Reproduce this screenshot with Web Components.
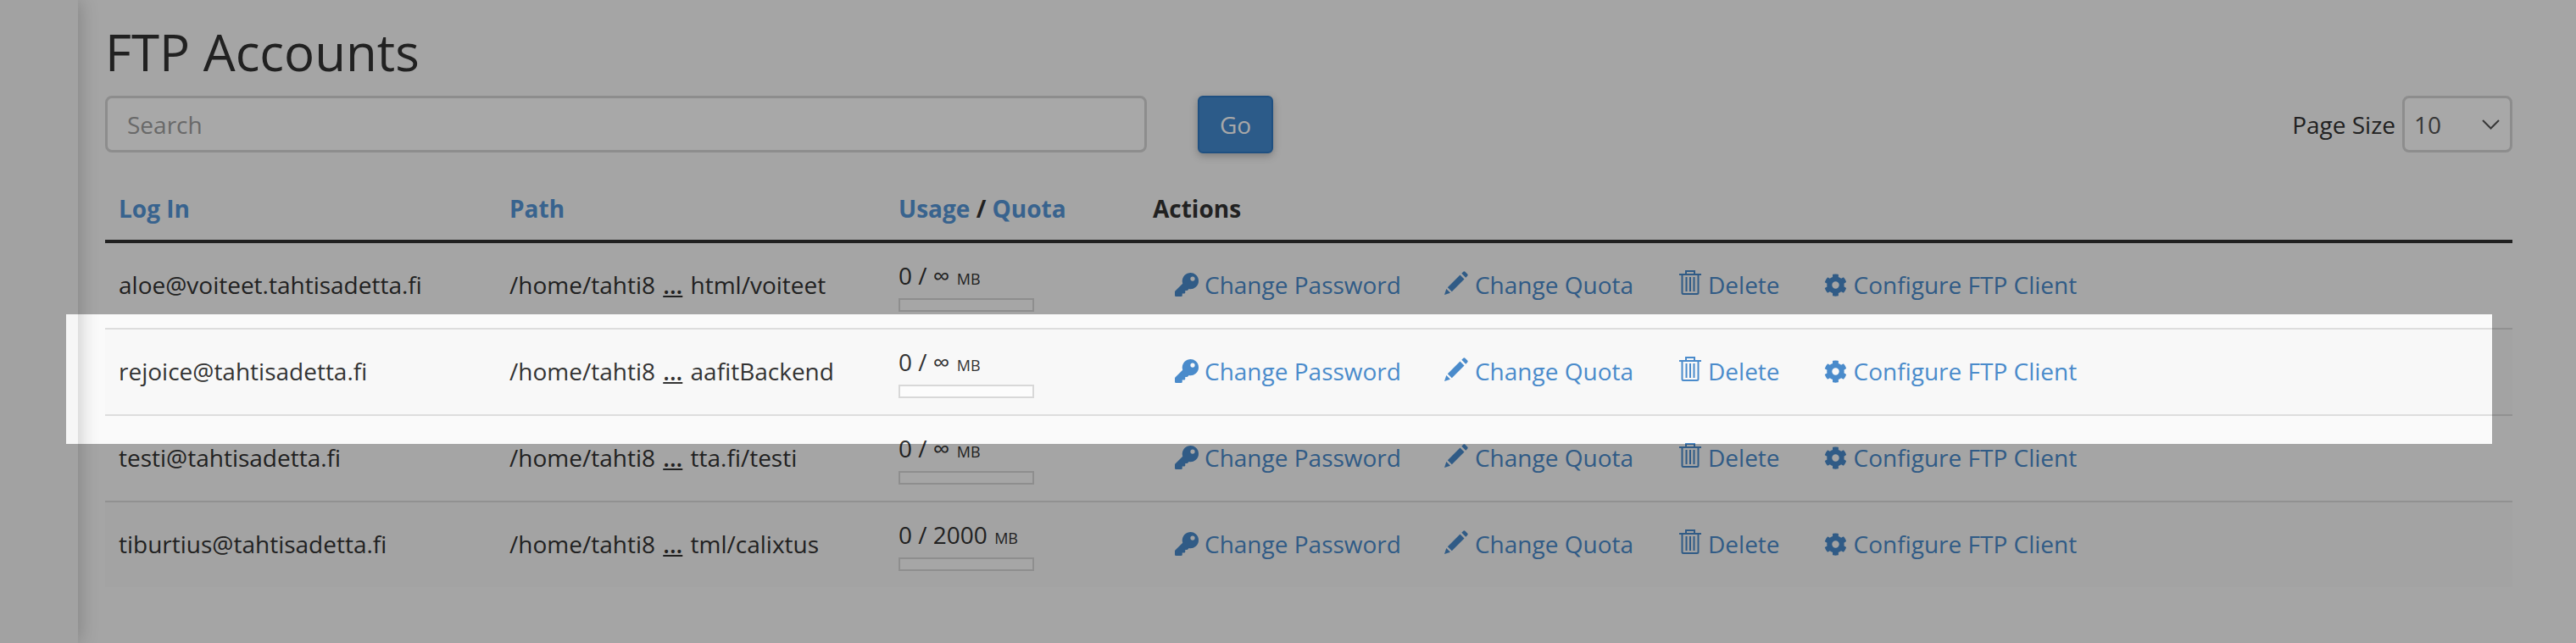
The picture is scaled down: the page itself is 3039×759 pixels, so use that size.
<!DOCTYPE html>
<html>
<head>
<meta charset="utf-8">
<title>FTP Accounts</title>
<style>
  html, body { margin: 0; height: 100%; background: #fafafa; }
  body { font-family: "Open Sans", sans-serif; color: #333; overflow: hidden; }
</style>
</head>
<body>
<ftp-page>
  <ftp-row login="aloe@voiteet.tahtisadetta.fi" path-a="/home/tahti8" path-b="html/voiteet" quota="∞"></ftp-row>
  <ftp-row login="rejoice@tahtisadetta.fi" path-a="/home/tahti8" path-b="aafitBackend" quota="∞"></ftp-row>
  <ftp-row login="testi@tahtisadetta.fi" path-a="/home/tahti8" path-b="tta.fi/testi" quota="∞"></ftp-row>
  <ftp-row login="tiburtius@tahtisadetta.fi" path-a="/home/tahti8" path-b="tml/calixtus" quota="2000"></ftp-row>
</ftp-page>
<script>
  "use strict";

  const ICONS = {
    key: '<svg viewBox="0 0 512 512" fill="currentColor"><path d="M512 176a176 176 0 0 1-208.600 173L280 375.400a24 24 0 0 1-18 8.600h-38v40a24 24 0 0 1-24 24h-40v40a24 24 0 0 1-24 24H24a24 24 0 0 1-24-24v-78a24 24 0 0 1 7-17l161.800-161.800A176 176 0 1 1 512 176zm-176-48a48 48 0 1 0 96 0 48 48 0 0 0-96 0z" fill-rule="evenodd"/></svg>',
    pencil: '<svg viewBox="0 0 29 29" fill="currentColor"><path d="M0 29l2.300-7 4.700 4.700zM3.800 20.300L18.500 5.600l5 5L8.800 25.300zM20.300 3.800l2-2a1.500 1.500 0 0 1 2.100 0l2.800 2.800a1.500 1.500 0 0 1 0 2.100l-2 2z"/></svg>',
    trash: '<svg viewBox="0 0 26 30" fill="none" stroke="currentColor" stroke-width="2"><path d="M0 6h26M8 6V2h10v4M3.500 6v21.500q0 1.500 1.500 1.500h16q1.500 0 1.500-1.500V6M8.500 9v17M13 9v17M17.500 9v17"/></svg>',
    gear: '<svg viewBox="0 0 512 512" fill="currentColor"><path fill-rule="evenodd" d="M487 316l-42-25a190 190 0 0 0 0-70l42-25c5-3 7-8 6-14a248 248 0 0 0-55-95c-4-4-10-5-15-2l-42 24a190 190 0 0 0-61-35V26c0-6-4-11-10-12a250 250 0 0 0-110 0c-6 1-10 6-10 12v49a193 193 0 0 0-61 35L87 86c-5-3-11-2-15 2a246 246 0 0 0-55 95c-2 6 1 11 6 14l42 25a190 190 0 0 0 0 70l-42 24c-5 3-8 9-6 14a248 248 0 0 0 55 95c4 4 10 5 15 2l42-24a190 190 0 0 0 61 35v49c0 6 4 11 10 12a250 250 0 0 0 110 0c6-1 10-6 10-12v-49a193 193 0 0 0 61-35l42 24c5 3 11 2 15-2a246 246 0 0 0 55-95c1-5-1-11-6-14zM256 336a80 80 0 1 1 0-160 80 80 0 0 1 0 160z"/></svg>'
  };

  const COLUMNS = "461px 459px 300px 1fr";

  class FtpAction extends HTMLElement {
    constructor() {
      super();
      this.attachShadow({ mode: "open" });
      const icon = ICONS[this.getAttribute("icon")];
      this.shadowRoot.innerHTML = `
        <style>
          :host { display: inline-flex; align-items: center; color: #4a8bcb; font-size: 28px; white-space: nowrap; }
          svg { display: block; flex: none; width: var(--w, 28px); height: var(--h, 28px); margin-right: var(--g, 7px); margin-bottom: var(--lift, 0); }
        </style>
        ${icon}<slot></slot>
      `;
    }
  }
  customElements.define("ftp-action", FtpAction);

  class FtpRow extends HTMLElement {
    constructor() {
      super();
      this.attachShadow({ mode: "open" });
      const get = (n) => this.getAttribute(n);
      this.shadowRoot.innerHTML = `
        <style>
          :host { display: grid; grid-template-columns: ${COLUMNS}; align-items: center; height: 100px; border-bottom: 2px solid #ddd; font-size: 28px; }
          :host(:last-child) { border-bottom: 0; }
          :host(:nth-child(even)) { background: #f8f8f8; }
          .cell { padding: 0 0 2px 16px; white-space: nowrap; }
          u { margin: 0 2px; font-weight: 600; }
          .usage { display: flex; flex-direction: column; gap: 9px; padding: 0 0 0 16px; margin-top: 2px; }
          .usage div:first-child { line-height: 35px; height: 35px; }
          small { font-size: 18px; margin-left: 1px; line-height: 1; }
          .bar { width: 160px; height: 16px; box-sizing: border-box; border: 2px solid #d8d8d8; background: #fcfcfc; }
          .actions { display: flex; padding-left: 42px; }
          ftp-action:nth-child(1) { margin-right: 51px; }
          ftp-action:nth-child(2) { margin-right: 54px; --w: 29px; --h: 29px; --g: 7px; --lift: 5px; }
          ftp-action:nth-child(3) { margin-right: 52px; --w: 26px; --h: 30px; --g: 8px; --lift: 6px; }
          ftp-action:nth-child(4) { --w: 27px; --h: 27px; --g: 8px; }
        </style>
        <div class="cell">${get("login")}</div>
        <div class="cell">${get("path-a")} <u>...</u> ${get("path-b")}</div>
        <div class="cell usage"><div>0 / ${get("quota")} <small>MB</small></div><div class="bar"></div></div>
        <div class="cell actions">
          <ftp-action icon="key">Change Password</ftp-action>
          <ftp-action icon="pencil">Change Quota</ftp-action>
          <ftp-action icon="trash">Delete</ftp-action>
          <ftp-action icon="gear">Configure FTP Client</ftp-action>
        </div>
      `;
    }
  }
  customElements.define("ftp-row", FtpRow);

  class FtpPage extends HTMLElement {
    constructor() {
      super();
      this.attachShadow({ mode: "open" });
      this.shadowRoot.innerHTML = `
        <style>
          :host { display: flex; position: relative; height: 759px; overflow: hidden; background: #fafafa; }
          .side { width: 92px; flex: none; box-shadow: 2px 0 22px rgba(0,0,0,.2); background: #f6f6f6; }
          .main { flex: 1; padding: 0 75px 0 32px; min-width: 0; }
          h1 { font-size: 60px; font-weight: 400; margin: 0; padding-top: 20px; line-height: 82px; height: 112px; box-sizing: border-box; }
          .tools { display: flex; align-items: center; height: 69px; font-size: 28px; }
          .search { box-sizing: border-box; width: 1229px; height: 67px; border: 3px solid #d6d6d6; border-radius: 8px; padding-left: 23px; color: #a0a0a0; display: flex; align-items: center; background: #fff; }
          .go { margin-left: 60px; width: 89px; height: 68px; box-sizing: border-box; background: #438ad1; color: #fff; border: 2px solid #307ac4; border-radius: 6px; display: flex; align-items: center; justify-content: center; box-shadow: 0 3px 10px rgba(0,0,0,.25); }
          .size { margin-left: auto; display: flex; align-items: center; gap: 8px; }
          .select { box-sizing: border-box; width: 130px; height: 67px; border: 3px solid #d6d6d6; border-radius: 8px; padding: 0 12px 0 11px; display: flex; align-items: center; justify-content: space-between; background: #fff; color: #555; }
          .select svg { width: 21px; height: 12px; }
          .thead { display: grid; grid-template-columns: ${COLUMNS}; align-items: end; height: 102px; border-bottom: 4px solid #333; font-size: 28px; font-weight: 700; }
          .thead div { padding: 0 0 18px 16px; line-height: 38px; white-space: nowrap; }
          .thead .sort { color: #5596d8; }
          .spot { position: absolute; left: 78px; top: 371px; width: 2862px; height: 153px; box-shadow: 0 0 0 4000px rgba(0,0,0,.34); pointer-events: none; }
        </style>
        <div class="side"></div>
        <div class="main">
          <h1>FTP Accounts</h1>
          <div class="tools">
            <div class="search">Search</div>
            <div class="go">Go</div>
            <div class="size">Page Size
              <div class="select">10<svg viewBox="0 0 21 12" fill="none" stroke="#555" stroke-width="2"><path d="M1 1l9.500 9.500L20 1"/></svg></div>
            </div>
          </div>
          <div class="thead">
            <div class="sort">Log In</div>
            <div class="sort">Path</div>
            <div><span class="sort">Usage</span> / <span class="sort">Quota</span></div>
            <div>Actions</div>
          </div>
          <slot></slot>
        </div>
        <div class="spot"></div>
      `;
    }
  }
  customElements.define("ftp-page", FtpPage);
</script>
</body>
</html>
